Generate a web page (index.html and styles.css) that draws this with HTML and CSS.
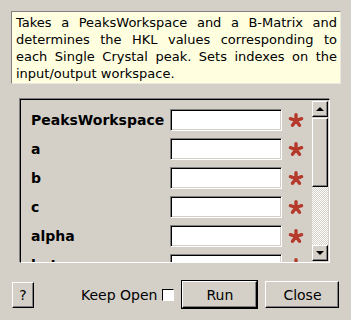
FILE: index.html
```html
<!DOCTYPE html>
<html lang="en">
<head>
<meta charset="UTF-8">
<title>Algorithm Dialog</title>
<link rel="stylesheet" href="styles.css">
</head>
<body>

<div class="dialog">
    <div class="description">
        Takes a PeaksWorkspace and a B-Matrix and determines the HKL values corresponding to each Single Crystal peak. Sets indexes on the input/output workspace.
    </div>

    <div class="props">
        <div class="prop-list">
            <div class="row">
                <label>PeaksWorkspace</label>
                <input type="text">
                <svg class="star" viewBox="0 0 16 16"><path d="M8 8.5 L8 2.6 M8 8.5 L13.6 6.7 M8 8.5 L11.5 13.3 M8 8.5 L4.5 13.3 M8 8.5 L2.4 6.7"/></svg>
            </div>
            <div class="row">
                <label>a</label>
                <input type="text">
                <svg class="star" viewBox="0 0 16 16"><path d="M8 8.5 L8 2.6 M8 8.5 L13.6 6.7 M8 8.5 L11.5 13.3 M8 8.5 L4.5 13.3 M8 8.5 L2.4 6.7"/></svg>
            </div>
            <div class="row">
                <label>b</label>
                <input type="text">
                <svg class="star" viewBox="0 0 16 16"><path d="M8 8.5 L8 2.6 M8 8.5 L13.6 6.7 M8 8.5 L11.5 13.3 M8 8.5 L4.5 13.3 M8 8.5 L2.4 6.7"/></svg>
            </div>
            <div class="row">
                <label>c</label>
                <input type="text">
                <svg class="star" viewBox="0 0 16 16"><path d="M8 8.5 L8 2.6 M8 8.5 L13.6 6.7 M8 8.5 L11.5 13.3 M8 8.5 L4.5 13.3 M8 8.5 L2.4 6.7"/></svg>
            </div>
            <div class="row">
                <label>alpha</label>
                <input type="text">
                <svg class="star" viewBox="0 0 16 16"><path d="M8 8.5 L8 2.6 M8 8.5 L13.6 6.7 M8 8.5 L11.5 13.3 M8 8.5 L4.5 13.3 M8 8.5 L2.4 6.7"/></svg>
            </div>
            <div class="row">
                <label>beta</label>
                <input type="text">
                <svg class="star" viewBox="0 0 16 16"><path d="M8 8.5 L8 2.6 M8 8.5 L13.6 6.7 M8 8.5 L11.5 13.3 M8 8.5 L4.5 13.3 M8 8.5 L2.4 6.7"/></svg>
            </div>
        </div>
        <div class="scrollbar">
            <div class="sb-btn"><span class="arrow up"></span></div>
            <div class="sb-thumb"></div>
            <div class="sb-trough"></div>
            <div class="sb-btn"><span class="arrow down"></span></div>
        </div>
    </div>

    <div class="buttons">
        <button class="btn help">?</button>
        <div class="keep">Keep Open <span class="check"></span></div>
        <button class="btn run">Run</button>
        <button class="btn close">Close</button>
    </div>
</div>

</body>
</html>
```

FILE: styles.css
```css
body {
    margin: 0;
    background: #d4d0c8;
    font-family: "DejaVu Sans", sans-serif;
    font-size: 13px;
    color: #000;
}
.dialog {
    width: 351px;
    height: 320px;
    overflow: hidden;
}
.description {
    margin: 11px 0 0 11px;
    width: 321px;
    padding: 2px 3px 1px 4px;
    background: #ffffe0;
    border: 1px solid;
    border-color: #808080 #e8e8e0 #e8e8e0 #808080;
    line-height: 17px;
    text-align: justify;
}
.props {
    margin: 15px 0 0 20px;
    width: 308px;
    height: 162px;
    display: flex;
    border: 1px solid;
    border-color: #000 #fff #fff #000;
    box-shadow: -1px -1px 0 #808080;
}
.prop-list {
    flex: 1;
    overflow: hidden;
    padding: 9px 0 0 10px;
}
.row {
    display: flex;
    align-items: center;
    height: 22px;
    margin-bottom: 7px;
}
.row label {
    width: 139px;
    font-size: 14px;
    font-weight: bold;
}
.row input {
    width: 112px;
    height: 22px;
    box-sizing: border-box;
    margin: 0;
    padding: 0;
    background: #fff;
    border: 1px solid;
    border-color: #808080 #fff #fff #808080;
    box-shadow: inset 1px 1px 0 #000, inset -1px -1px 0 #d4d0c8;
}
.star {
    width: 16px;
    height: 16px;
    margin-left: 6px;
    fill: none;
    stroke: #b53a2c;
    stroke-width: 3.4;
    stroke-linecap: round;
}
.scrollbar {
    width: 16px;
    display: flex;
    flex-direction: column;
    margin: 1px 1px 1px 0;
}
.sb-btn, .sb-thumb {
    box-sizing: border-box;
    background: #d4d0c8;
    border: 1px solid;
    border-color: #fff #000 #000 #fff;
    box-shadow: inset -1px -1px 0 #808080;
}
.sb-btn {
    height: 16px;
    display: flex;
    align-items: center;
    justify-content: center;
}
.sb-thumb {
    height: 69px;
    margin-top: 1px;
}
.sb-trough {
    flex: 1;
    background: repeating-conic-gradient(#fff 0 25%, #d4d0c8 0 50%) 0 0 / 2px 2px;
}
.arrow {
    width: 0;
    height: 0;
    border-left: 4px solid transparent;
    border-right: 4px solid transparent;
}
.arrow.up {
    border-bottom: 4px solid #000;
}
.arrow.down {
    border-top: 4px solid #000;
}
.buttons {
    display: flex;
    align-items: center;
    margin-top: 17px;
    padding-left: 12px;
    font-size: 14px;
}
.btn {
    font-family: "DejaVu Sans", sans-serif;
    font-size: 14px;
    color: #000;
    background: #d4d0c8;
    padding: 0;
    border: 1px solid;
    border-color: #fff #000 #000 #fff;
    box-shadow: inset -1px -1px 0 #808080;
}
.help {
    width: 22px;
    height: 26px;
}
.keep {
    display: flex;
    align-items: center;
    margin-left: 47px;
}
.check {
    width: 10px;
    height: 10px;
    margin-left: 5px;
    background: #fff;
    border: 1px solid;
    border-color: #000 #fff #fff #000;
}
.run {
    width: 77px;
    height: 29px;
    margin-left: 7px;
    outline: 1px solid #000;
    outline-offset: -1px;
    border-width: 2px;
}
.close {
    width: 74px;
    height: 27px;
    margin-left: 7px;
}
```
